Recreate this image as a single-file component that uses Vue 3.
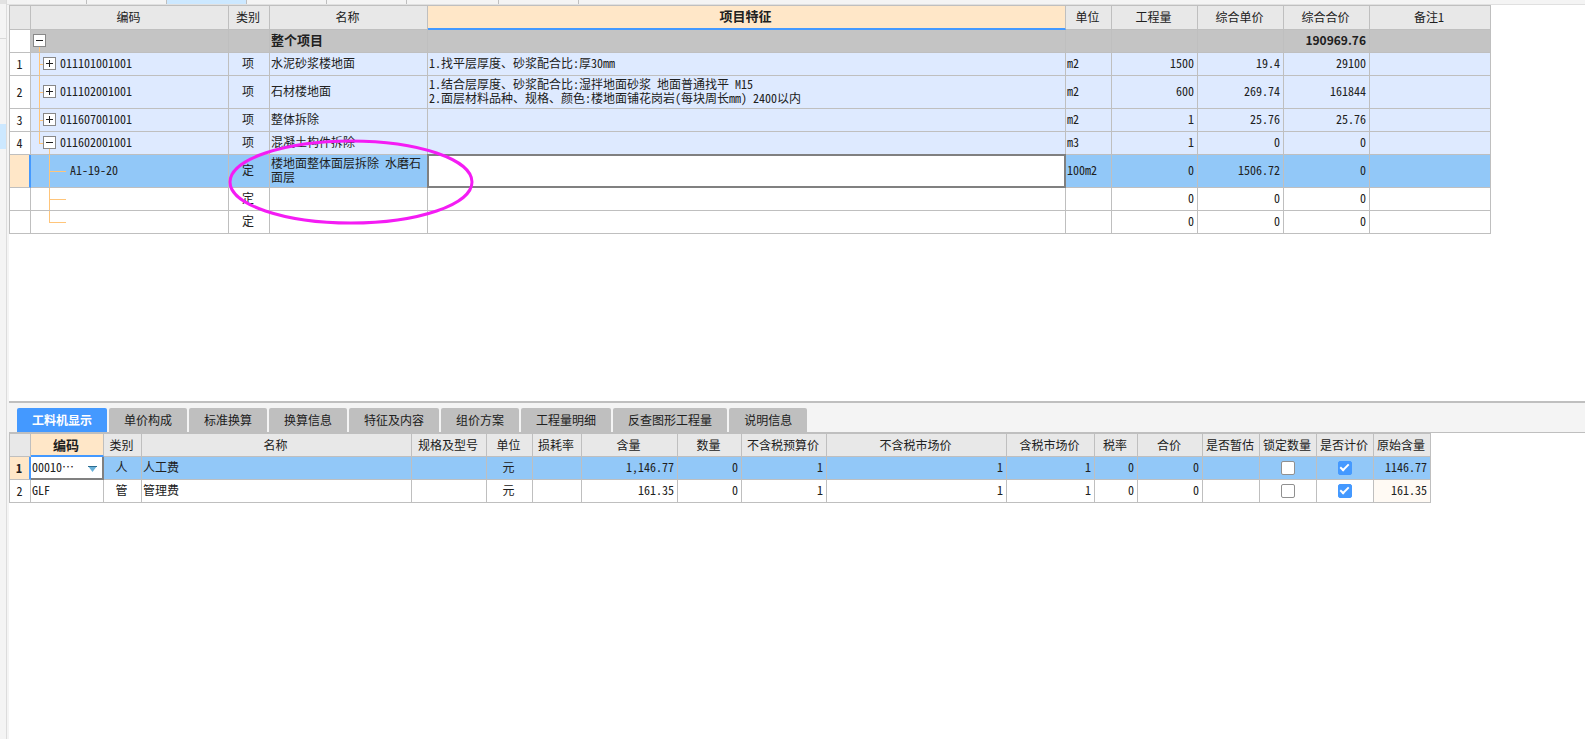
<script setup>
import { ref } from 'vue'

const itemRows = ref([
  { no: '', level: 0, mark: '-', code: '', kind: '', name: '整个项目', feature: '', unit: '', qty: '', price: '', total: '190969.76', tone: 'root', h: 22 },
  { no: '1', level: 1, mark: '+', code: '011101001001', kind: '项', name: '水泥砂浆楼地面', feature: '1.找平层厚度、砂浆配合比:厚30mm', unit: 'm2', qty: '1500', price: '19.4', total: '29100', tone: 'item', h: 22 },
  { no: '2', level: 1, mark: '+', code: '011102001001', kind: '项', name: '石材楼地面', feature: '1.结合层厚度、砂浆配合比:湿拌地面砂浆 地面普通找平 M15\n2.面层材料品种、规格、颜色:楼地面铺花岗岩(每块周长mm) 2400以内', unit: 'm2', qty: '600', price: '269.74', total: '161844', tone: 'item', h: 32 },
  { no: '3', level: 1, mark: '+', code: '011607001001', kind: '项', name: '整体拆除', feature: '', unit: 'm2', qty: '1', price: '25.76', total: '25.76', tone: 'item', h: 22 },
  { no: '4', level: 1, mark: '-', last: true, code: '011602001001', kind: '项', name: '混凝土构件拆除', feature: '', unit: 'm3', qty: '1', price: '0', total: '0', tone: 'item', h: 22 },
  { no: '', level: 2, code: 'A1-19-20', kind: '定', name: '楼地面整体面层拆除 水磨石面层', feature: '', unit: '100m2', qty: '0', price: '1506.72', total: '0', tone: 'current', h: 32 },
  { no: '', level: 2, code: '', kind: '定', name: '', feature: '', unit: '', qty: '0', price: '0', total: '0', tone: 'blank', h: 22 },
  { no: '', level: 2, last: true, code: '', kind: '定', name: '', feature: '', unit: '', qty: '0', price: '0', total: '0', tone: 'blank', h: 22 },
])

function branch(row) {
  const mid = row.h / 2
  if (row.level === 0) return `M8.5 ${mid}V${row.h}`
  if (row.level === 1) {
    const trunk = `M8.5 0V${row.last ? mid + 1 : row.h}M8 ${mid + 0.5}H13`
    return row.mark === '-' ? `${trunk}M18.5 ${mid}V${row.h}` : trunk
  }
  return `M18.5 0V${row.last ? mid + 1 : row.h}M18 ${mid + 0.5}H35`
}

const itemCols = ['index', 'code', 'kind', 'name', 'feature', 'unit', 'money', 'money', 'money', 'note']
const itemHeads = ['', '编码', '类别', '名称', '项目特征', '单位', '工程量', '综合单价', '综合合价', '备注1']

const tabs = ['工料机显示', '单价构成', '标准换算', '换算信息', '特征及内容', '组价方案', '工程量明细', '反查图形工程量', '说明信息']
const activeTab = ref('工料机显示')

const resHeads = ['', '编码', '类别', '名称', '规格及型号', '单位', '损耗率', '含量', '数量', '不含税预算价', '不含税市场价', '含税市场价', '税率', '合价', '是否暂估', '锁定数量', '是否计价', '原始含量']
const resRows = ref([
  { code: '00010…', kind: '人', name: '人工费', unit: '元', content: '1,146.77', locked: false, priced: true, origin: '1146.77' },
  { code: 'GLF', kind: '管', name: '管理费', unit: '元', content: '161.35', locked: false, priced: true, origin: '161.35' },
])
</script>

<template>
  <div class="app">
    <aside class="rail">
      <div class="rail-head"></div>
      <div class="rail-panel"></div>
      <div class="rail-active"></div>
    </aside>
    <main class="main">
      <div class="doc-tabs">
        <span v-for="n in 7" :key="n" class="doc-tab" :class="{ first: n === 1, on: n === 3, wide: n === 6 }"></span>
      </div>

      <section class="upper">
        <table class="grid items">
          <colgroup><col v-for="(c, i) in itemCols" :key="i" :class="'c-' + c"></colgroup>
          <thead>
            <tr>
              <th v-for="(h, i) in itemHeads" :key="i" :class="{ focus: i === 4 }">{{ h }}</th>
            </tr>
          </thead>
          <tbody>
            <tr v-for="(row, r) in itemRows" :key="r" :class="[row.tone, { tall: row.h > 22 }]">
              <td class="index">{{ row.no }}</td>
              <td class="tree">
                <svg class="branch" width="36" :height="row.h" aria-hidden="true"><path :d="branch(row)" /></svg>
                <div class="node" :class="'level' + row.level">
                  <button v-if="row.mark" type="button" class="toggle" :aria-label="row.mark === '+' ? '展开' : '折叠'">
                    <svg width="11" height="11" aria-hidden="true"><path :d="row.mark === '+' ? 'M2 5.5H9M5.5 2V9' : 'M2 5.5H9'" /></svg>
                  </button>
                  <span>{{ row.code }}</span>
                </div>
              </td>
              <td class="mid">{{ row.kind }}</td>
              <td class="wrap">{{ row.name }}</td>
              <td class="wrap cell-feature">
                <input v-if="row.tone === 'current'" v-model="row.feature" class="editor" type="text" aria-label="项目特征">
                <template v-else>{{ row.feature }}</template>
              </td>
              <td>{{ row.unit }}</td>
              <td class="num">{{ row.qty }}</td>
              <td class="num">{{ row.price }}</td>
              <td class="num">{{ row.total }}</td>
              <td></td>
            </tr>
          </tbody>
        </table>
        <svg class="ring" viewBox="0 0 246 86" width="246" height="86" aria-hidden="true">
          <ellipse cx="123" cy="43" rx="121" ry="41" />
        </svg>
      </section>

      <section class="lower">
        <nav class="tabs">
          <button v-for="t in tabs" :key="t" type="button" class="tab" :class="{ on: t === activeTab }" @click="activeTab = t">{{ t }}</button>
        </nav>
        <table class="grid resources">
          <colgroup><col v-for="n in 18" :key="n" :class="'r' + n"></colgroup>
          <thead>
            <tr>
              <th v-for="(h, i) in resHeads" :key="i" :class="{ focus: i === 1 }">{{ h }}</th>
            </tr>
          </thead>
          <tbody>
            <tr v-for="(row, r) in resRows" :key="row.code" :class="r === 0 ? 'current' : 'blank'">
              <td class="index">{{ r + 1 }}</td>
              <td v-if="r === 0" class="picker">
                <div class="picker-box">
                  <select aria-label="编码"><option>{{ row.code }}</option></select>
                  <svg class="arrow" width="9" height="6" aria-hidden="true">
                    <path class="arrow-fill" d="M0 0H9L4.5 6Z" /><path class="arrow-top" d="M0 .5H9" />
                  </svg>
                </div>
              </td>
              <td v-else>{{ row.code }}</td>
              <td class="mid">{{ row.kind }}</td>
              <td>{{ row.name }}</td>
              <td></td>
              <td class="mid">{{ row.unit }}</td>
              <td></td>
              <td class="num">{{ row.content }}</td>
              <td class="num">0</td>
              <td class="num">1</td>
              <td class="num">1</td>
              <td class="num">1</td>
              <td class="num">0</td>
              <td class="num">0</td>
              <td></td>
              <td class="tick"><input v-model="row.locked" type="checkbox" class="check" aria-label="锁定数量"></td>
              <td class="tick"><input v-model="row.priced" type="checkbox" class="check" aria-label="是否计价"></td>
              <td class="num origin">{{ row.origin }}</td>
            </tr>
          </tbody>
        </table>
      </section>
    </main>
  </div>
</template>

<style>
body {
  margin: 0;
  background: #fff;
}
</style>

<style scoped>
.app {
  display: flex;
  min-height: 100vh;
  font: 12px/14px "Noto Sans CJK SC", sans-serif;
  font-feature-settings: "hwid" 1;
  color: #202020;
  background: #f4f4f4;
}
.rail {
  flex: none;
  display: flex;
  flex-direction: column;
  width: 6px;
  border-right: 1px solid #dcdcdc;
}
.rail-head {
  height: 4px;
  background: #e2e2e2;
}
.rail-panel {
  height: 34px;
  border-bottom: 1px solid #d8d8d8;
}
.rail-active {
  height: 25px;
  margin-top: 85px;
  background: #cce8ff;
}
.main {
  flex: 1;
  min-width: 0;
  display: flex;
  flex-direction: column;
}
.doc-tabs {
  flex: none;
  display: flex;
  height: 4px;
  border-bottom: 1px solid #e0e0e0;
}
.doc-tab {
  box-sizing: border-box;
  width: 80px;
  border-right: 1px solid #bfbfbf;
}
.doc-tab.wide {
  width: 92px;
}
.doc-tab.on {
  background: #cce8ff;
}
.upper {
  position: relative;
  flex: 396 1 0;
  margin-left: 2px;
  background: #fff;
}
.lower {
  flex: 338 1 0;
  margin-left: 2px;
  background: #fff;
}

.grid {
  table-layout: fixed;
  border-collapse: separate;
  border-spacing: 0;
  border-left: 1px solid #bfbfbf;
}
.items {
  width: calc(100% - 94px);
  border-top: 1px solid #bfbfbf;
}
.resources {
  width: calc(100% - 154px);
}
.c-index { width: 21px; }
.c-code { width: 198px; }
.c-kind { width: 41px; }
.c-name { width: 158px; }
.c-unit { width: 46px; }
.c-money { width: 86px; }
.c-note { width: 121px; }

.r1 { width: 21px; }
.r2 { width: 73px; }
.r3 { width: 38px; }
.r4 { width: 270px; }
.r5 { width: 75px; }
.r6 { width: 46px; }
.r7 { width: 49px; }
.r8 { width: 96px; }
.r9 { width: 64px; }
.r10 { width: 85px; }
.r12 { width: 88px; }
.r13 { width: 43px; }
.r14 { width: 65px; }
.r15, .r16, .r17, .r18 { width: 57px; }

.grid th,
.grid td {
  box-sizing: border-box;
  height: 23px;
  padding: 0 3px 2px 1px;
  border-right: 1px solid #bfbfbf;
  border-bottom: 1px solid #bfbfbf;
  text-align: left;
  white-space: nowrap;
}
.grid th {
  padding: 0 2px 0 0;
  background: #e8e8e8;
  font-weight: 400;
  text-align: center;
}
.items th {
  height: 24px;
  padding-bottom: 2px;
}
.grid th.focus {
  background: #ffe7c8;
  border-bottom: 2px solid #4499ff;
  font-size: 13px;
  font-weight: 700;
}
.grid .tall td {
  height: 33px;
}
.grid .mid {
  text-align: center;
}
.grid .num {
  text-align: right;
}
.grid .wrap {
  white-space: pre-wrap;
}
.root td {
  background: #c4c4c4;
  font-size: 13px;
  font-weight: 700;
}
.root .num {
  font-size: 12px;
  font-feature-settings: normal;
}
.item td {
  background: #deeaff;
}
.current td {
  background: #92c8f8;
}
.grid .index {
  padding: 0 1px 0 0;
  background: #fff;
  text-align: center;
}
.grid .current .index {
  background: #ffe7c8;
  border-right: 2px solid #4499ff;
  font-weight: 700;
}
.grid .tick {
  padding: 0;
}
.blank .origin {
  background: #fffaf4;
}

.grid .tree {
  position: relative;
  padding: 0 0 2px;
}
.branch {
  position: absolute;
  top: 0;
  left: 0;
}
.branch path {
  fill: none;
  stroke: #ffc57a;
}
.node {
  position: relative;
  display: flex;
  align-items: center;
  gap: 4px;
}
.level0 { padding-left: 2px; }
.level1 { padding-left: 12px; }
.level2 { padding-left: 39px; }
.toggle {
  flex: none;
  width: 13px;
  height: 13px;
  padding: 0;
  border: 1px solid #888;
  background: #fff;
}
.toggle svg {
  display: block;
}
.toggle path {
  fill: none;
  stroke: #202020;
}
.grid .cell-feature {
  position: relative;
}
.editor {
  position: absolute;
  inset: -1px;
  box-sizing: border-box;
  width: calc(100% + 2px);
  height: calc(100% + 2px);
  padding: 0 2px;
  border: 2px solid #808080;
  background: #fff;
  font: inherit;
  outline: none;
}
.ring {
  position: absolute;
  left: 219px;
  top: 134px;
  pointer-events: none;
}
.ring ellipse {
  fill: none;
  stroke: #f41cf4;
  stroke-width: 3;
}

.tabs {
  display: flex;
  gap: 2px;
  padding: 5px 8px 0;
  border-top: 2px solid #bfbfbf;
  border-bottom: 1px solid #bfbfbf;
  background: #f4f4f4;
}
.tab {
  height: 24px;
  padding: 0 15px;
  border: 0;
  border-radius: 2px 2px 0 0;
  background: #bfbfbf;
  color: #202020;
  font: inherit;
}
.tab.on {
  background: #4499ff;
  color: #fff;
  font-weight: 700;
}
.resources {
  border-top: 1px solid #bfbfbf;
}

.grid .picker {
  padding: 0;
  background: #fff;
  border-right: 2px solid #808080;
  border-bottom: 2px solid #808080;
}
.picker-box {
  display: flex;
  align-items: center;
  padding: 0 5px 0 1px;
}
.picker select {
  flex: 1;
  min-width: 0;
  height: 20px;
  padding: 0 0 2px;
  border: 0;
  appearance: none;
  background: transparent;
  color: inherit;
  font: inherit;
  font-feature-settings: inherit;
  outline: none;
}
.arrow {
  flex: none;
  margin-top: 2px;
  pointer-events: none;
}
.arrow-fill {
  fill: #68b0d8;
}
.arrow-top {
  stroke: #2c6c90;
}
.check {
  appearance: none;
  display: block;
  box-sizing: border-box;
  width: 14px;
  height: 14px;
  margin: 0 auto;
  border: 1px solid #909090;
  border-radius: 2px;
  background: #fff;
}
.check:checked {
  border-color: #4499ff;
  background: #4499ff;
}
.check:checked::after {
  content: "";
  display: block;
  width: 7px;
  height: 3px;
  margin: 2px 0 0 1px;
  border: solid #fff;
  border-width: 0 0 2px 2px;
  transform: rotate(-45deg);
}
</style>
